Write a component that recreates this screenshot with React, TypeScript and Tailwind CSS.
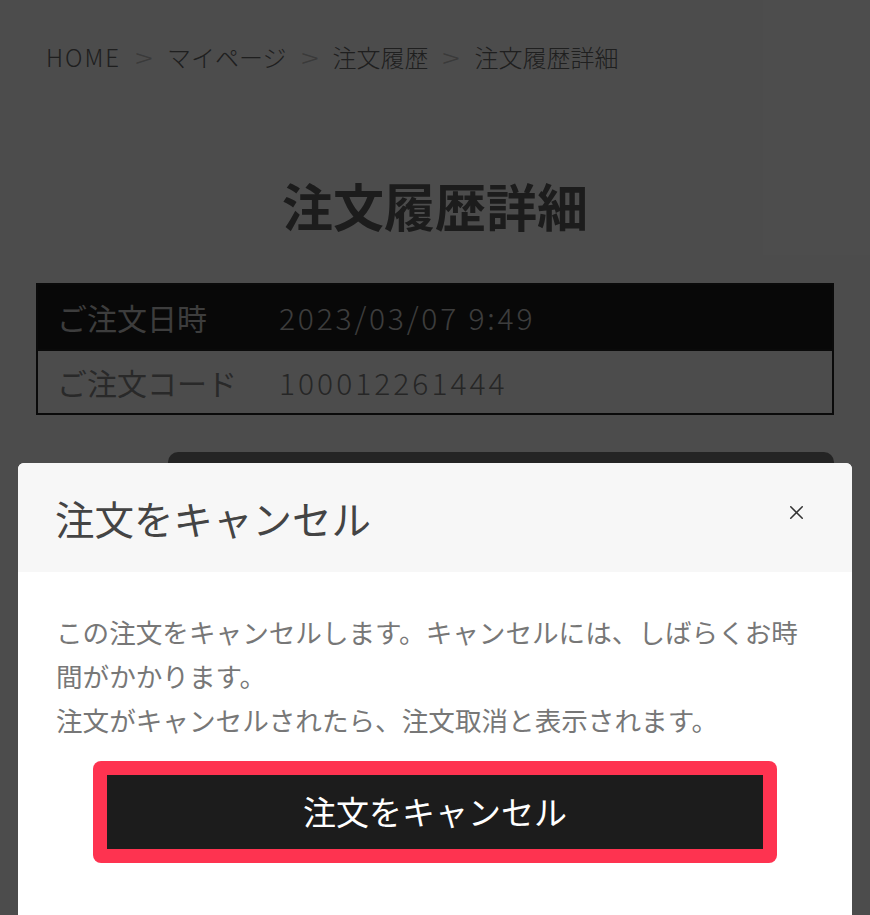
import { X } from "lucide-react";

const jp = { fontFamily: '"Noto Sans CJK JP", "Noto Sans", sans-serif' };

function Breadcrumb() {
  const items = ["HOME", "マイページ", "注文履歴", "注文履歴詳細"];
  return (
    <nav className="ml-[10px] mt-[43px] flex items-center text-[24px] leading-[28px] font-light text-[#686868]">
      {items.map((item, i) => (
        <span key={item} className="flex items-center">
          {i > 0 && <span className="mx-[16px] text-[26px] text-[#c1c1c1] scale-x-125">&gt;</span>}
          <span className={i === 0 ? "tracking-[2px]" : ""}>{item}</span>
        </span>
      ))}
    </nav>
  );
}

function OrderTable() {
  return (
    <div className="mt-[48px] border-2 border-[#222]">
      <div className="flex h-[64px] items-center bg-[#1b1b1b] text-[30px] text-[#cbcbcb]">
        <div className="w-[241px] pl-[19px]">ご注文日時</div>
        <div className="font-light tracking-[2.8px]">2023/03/07 9:49</div>
      </div>
      <div className="flex h-[64px] items-center border-t-2 border-[#222] text-[30px] text-[#7f7f7f]">
        <div className="w-[241px] pl-[19px] text-[#8a8a8a]">ご注文コード</div>
        <div className="font-light tracking-[3px]">100012261444</div>
      </div>
    </div>
  );
}

function CancelModal() {
  return (
    <div className="absolute left-[18px] right-[18px] top-[463px] bottom-0 overflow-hidden rounded-t-[6px] bg-white">
      <div className="flex h-[109px] items-center justify-between bg-[#f7f7f7] pl-[37px] pr-[44px]">
        <h2 className="text-[39.5px] leading-none text-[#444]">注文をキャンセル</h2>
        <button className="mb-[10px] text-[#333]" aria-label="閉じる">
          <X size={23} strokeWidth={1.6} />
        </button>
      </div>
      <div className="px-[38px] pt-[38px]">
        <p className="text-[26.6px] leading-[44px] text-[#777]">
          この注文をキャンセルします。キャンセルには、しばらくお時間がかかります。
          <br />
          注文がキャンセルされたら、注文取消と表示されます。
        </p>
        <div className="mx-auto mt-[19px] w-[684px] rounded-[8px] bg-[#fe3350] p-[14px]">
          <button className="flex h-[74px] w-full items-center justify-center bg-[#1c1c1c] text-[33px] text-white">
            注文をキャンセル
          </button>
        </div>
      </div>
    </div>
  );
}

export default function App() {
  return (
    <div className="relative h-[915px] w-full overflow-hidden bg-white" style={jp}>
      <div className="px-[36px]">
        <Breadcrumb />
        <h1 className="mt-[104px] text-center text-[51px] font-bold leading-[60px] text-[#606060]">
          注文履歴詳細
        </h1>
        <OrderTable />
        <div className="ml-[132px] mt-[37px] h-[80px] rounded-[10px] bg-[#7a7a7a] shadow-lg" />
      </div>

      {/* オーバーレイ */}
      <div className="absolute inset-0 bg-black/70" />
      <CancelModal />
    </div>
  );
}
